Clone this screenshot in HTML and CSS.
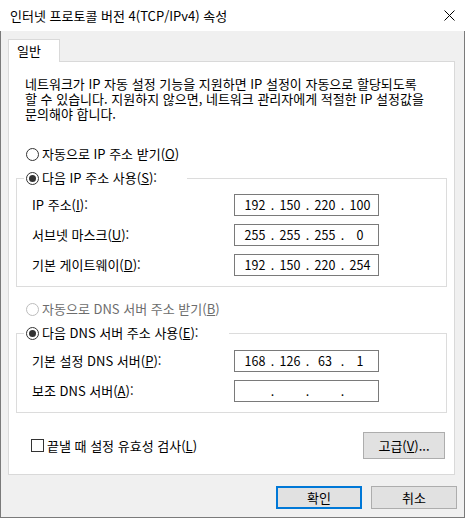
FILE: index.html
```html
<!DOCTYPE html>
<html lang="ko">
<head>
<meta charset="utf-8">
<title>인터넷 프로토콜 버전 4(TCP/IPv4) 속성</title>
<link rel="stylesheet" href="styles.css">
</head>
<body>
<div class="window">
  <div class="titlebar">
    <span class="title">인터넷 프로토콜 버전 4(TCP/IPv4) 속성</span>
    <svg class="close" width="11" height="11" viewBox="0 0 11 11"><path d="M0.5 0.5 L10.5 10.5 M10.5 0.5 L0.5 10.5" stroke="#000" stroke-width="1" fill="none"/></svg>
  </div>
  <div class="body">
    <div class="tabs"><div class="tab">일반</div></div>
    <div class="panel">
      <p class="desc">네트워크가 IP 자동 설정 기능을 지원하면 IP 설정이 자동으로 할당되도록<br>할 수 있습니다. 지원하지 않으면, 네트워크 관리자에게 적절한 IP 설정값을<br>문의해야 합니다.</p>

      <div class="radio r-auto">
        <svg class="rb" width="13" height="13" viewBox="0 0 13 13"><circle cx="6.5" cy="6.5" r="6" fill="#fff" stroke="#333"/></svg>
        <span>자동으로 IP 주소 받기(<u>O</u>)</span>
      </div>

      <fieldset class="group">
        <legend class="radio lg-ip">
          <svg class="rb" width="13" height="13" viewBox="0 0 13 13"><circle cx="6.5" cy="6.5" r="6" fill="#fff" stroke="#333"/><circle cx="6.5" cy="6.5" r="3.5" fill="#333"/></svg>
          <span>다음 IP 주소 사용(<u>S</u>):</span>
        </legend>
        <div class="rows">
          <span class="lbl">IP 주소(<u>I</u>):</span>
          <div class="ipbox"><span class="seg">192</span><span class="dot">.</span><span class="seg">150</span><span class="dot">.</span><span class="seg">220</span><span class="dot">.</span><span class="seg">100</span></div>
          <span class="lbl">서브넷 마스크(<u>U</u>):</span>
          <div class="ipbox"><span class="seg">255</span><span class="dot">.</span><span class="seg">255</span><span class="dot">.</span><span class="seg">255</span><span class="dot">.</span><span class="seg">0</span></div>
          <span class="lbl">기본 게이트웨이(<u>D</u>):</span>
          <div class="ipbox"><span class="seg">192</span><span class="dot">.</span><span class="seg">150</span><span class="dot">.</span><span class="seg">220</span><span class="dot">.</span><span class="seg">254</span></div>
        </div>
      </fieldset>

      <div class="radio r-dns disabled">
        <svg class="rb" width="13" height="13" viewBox="0 0 13 13"><circle cx="6.5" cy="6.5" r="6" fill="#fff" stroke="#bcbcbc"/></svg>
        <span>자동으로 DNS 서버 주소 받기(<u>B</u>)</span>
      </div>

      <fieldset class="group g-dns">
        <legend class="radio lg-dns">
          <svg class="rb" width="13" height="13" viewBox="0 0 13 13"><circle cx="6.5" cy="6.5" r="6" fill="#fff" stroke="#333"/><circle cx="6.5" cy="6.5" r="3.5" fill="#333"/></svg>
          <span>다음 DNS 서버 주소 사용(<u>E</u>):</span>
        </legend>
        <div class="rows rows-dns">
          <span class="lbl">기본 설정 DNS 서버(<u>P</u>):</span>
          <div class="ipbox"><span class="seg">168</span><span class="dot">.</span><span class="seg">126</span><span class="dot">.</span><span class="seg">63</span><span class="dot">.</span><span class="seg">1</span></div>
          <span class="lbl">보조 DNS 서버(<u>A</u>):</span>
          <div class="ipbox"><span class="seg"></span><span class="dot">.</span><span class="seg"></span><span class="dot">.</span><span class="seg"></span><span class="dot">.</span><span class="seg"></span></div>
        </div>
      </fieldset>

      <div class="bottomrow">
        <div class="check"><span class="cb"></span><span>끝낼 때 설정 유효성 검사(<u>L</u>)</span></div>
        <div class="btn adv">고급(<u>V</u>)...</div>
      </div>
    </div>
    <div class="buttons">
      <div class="btn primary">확인</div>
      <div class="btn">취소</div>
    </div>
  </div>
</div>
</body>
</html>
```

FILE: styles.css
```css
* {
  box-sizing: border-box;
  margin: 0;
  padding: 0;
}

body {
  margin: 0;
  font-family: "Noto Sans CJK KR", "Open Sans", sans-serif;
  font-size: 13px;
  color: #000;
  background: #fff;
}

.window {
  width: 465px;
  height: 518px;
  display: flex;
  flex-direction: column;
}

.titlebar {
  height: 31px;
  flex: none;
  background: #fff;
  display: flex;
  align-items: center;
  justify-content: space-between;
  padding: 0 10px 0 10px;
}

.title {
  line-height: 16px;
  white-space: nowrap;
}

.close {
  display: block;
}

.body {
  flex: 1;
  background: #f0f0f0;
  border: 1px solid #7a7a7a;
  border-top: none;
  padding: 8px 7px 0 7px;
}

.tabs {
  display: flex;
}

.tab {
  position: relative;
  z-index: 1;
  width: 52px;
  height: 23px;
  margin-bottom: -1px;
  border: 1px solid #d9d9d9;
  border-bottom: none;
  background: #fff;
  padding-left: 8px;
  line-height: 21px;
}

.panel {
  width: 447px;
  height: 414px;
  border: 1px solid #d9d9d9;
  background: #fff;
  padding: 14px 7px 0 7px;
}

.desc {
  margin-left: 9px;
  line-height: 15px;
  white-space: nowrap;
}

.radio {
  display: flex;
  align-items: center;
  gap: 3px;
  height: 16px;
  line-height: 16px;
  white-space: nowrap;
}

.rb {
  display: block;
  flex: none;
}

.r-auto {
  margin: 25px 0 0 10px;
}

.r-dns {
  margin: 14px 0 0 10px;
}

.disabled {
  color: #6d6d6d;
}

.group {
  border: 1px solid #dcdcdc;
  padding: 0;
  margin-top: 8px;
  min-width: 0;
}

.group legend {
  margin-left: 7px;
  padding: 0 2px;
}

.lg-ip {
  width: 163px;
}

.lg-dns {
  width: 205px;
}

.rows {
  display: grid;
  grid-template-columns: 202px 145px;
  grid-auto-rows: 22px;
  row-gap: 8px;
  align-items: center;
  padding: 8px 0 10px 15px;
}

.rows-dns {
  padding-top: 9px;
}

.lbl {
  white-space: nowrap;
  line-height: 16px;
}

.ipbox {
  height: 22px;
  border: 1px solid #7a7a7a;
  background: #fff;
  display: flex;
  align-items: center;
  padding-left: 6px;
  line-height: 16px;
  font-size: 12.5px;
}

.seg {
  width: 28px;
  text-align: center;
}

.dot {
  width: 7px;
  text-align: center;
}

.bottomrow {
  margin-top: 19px;
  display: flex;
  align-items: center;
  justify-content: space-between;
  padding: 0 2px 0 15px;
}

.check {
  display: flex;
  align-items: center;
  gap: 3px;
  line-height: 16px;
  white-space: nowrap;
}

.cb {
  display: block;
  width: 13px;
  height: 13px;
  border: 1px solid #333;
  background: #fff;
}

.btn {
  display: flex;
  align-items: center;
  justify-content: center;
  width: 86px;
  height: 23px;
  background: #e1e1e1;
  border: 1px solid #adadad;
  line-height: 16px;
  white-space: nowrap;
}

.btn.adv {
  width: 82px;
  height: 27px;
}

.btn.primary {
  border: 2px solid #0078d7;
}

.buttons {
  display: flex;
  justify-content: flex-end;
  gap: 9px;
  margin-top: 11px;
}
```
